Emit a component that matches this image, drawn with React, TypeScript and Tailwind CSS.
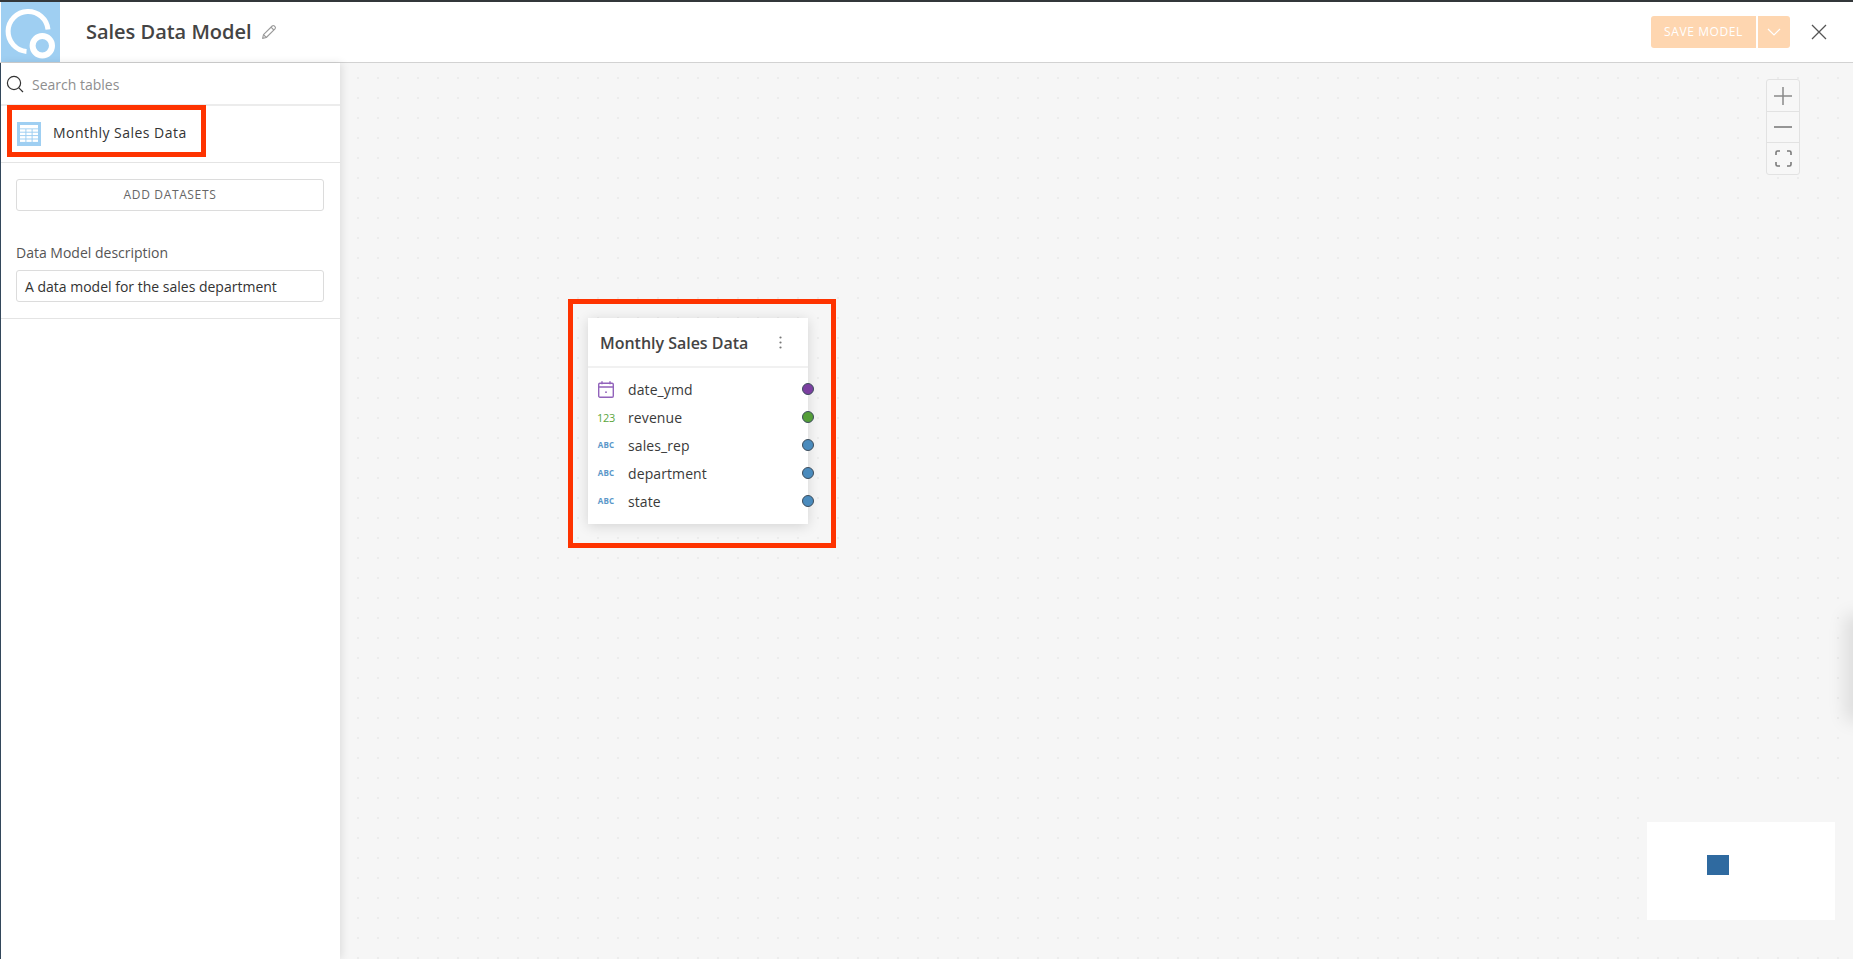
import React from "react";

const FONT = "font-['Open_Sans',sans-serif]";

const fields = [
  { name: "date_ymd", type: "date", dot: "bg-[#7b3fa0]" },
  { name: "revenue", type: "num", dot: "bg-[#549e39]" },
  { name: "sales_rep", type: "abc", dot: "bg-[#4a8bbd]" },
  { name: "department", type: "abc", dot: "bg-[#4a8bbd]" },
  { name: "state", type: "abc", dot: "bg-[#4a8bbd]" },
];

function Logo() {
  return (
    <div className="w-[59px] h-[60px] bg-[#9fcff2] shrink-0">
      <svg width="59" height="60" viewBox="0 0 59 60" fill="none">
        <path d="M47 27.5 A20 20 0 1 0 25.5 49.4" stroke="#fff" strokeWidth="5" />
        <circle cx="41.3" cy="43.7" r="9.7" stroke="#fff" strokeWidth="6" />
      </svg>
    </div>
  );
}

function TableIcon() {
  const rows = [0, 1, 2, 3];
  return (
    <svg width="24" height="24" viewBox="0 0 24 24" className="shrink-0">
      <rect width="24" height="24" fill="#9fcff2" />
      <rect x="3" y="3" width="18" height="3.4" fill="#fff" />
      {rows.map((r) => (
        <g key={r}>
          <rect x="3" y={7.3 + r * 3.4} width="5.4" height="2.4" fill="#fff" />
          <rect x="9.4" y={7.3 + r * 3.4} width="5.2" height="2.4" fill="#fff" />
          <rect x="15.6" y={7.3 + r * 3.4} width="5.4" height="2.4" fill="#fff" />
        </g>
      ))}
    </svg>
  );
}

function FieldIcon({ type }: { type: string }) {
  if (type === "date") {
    return (
      <svg width="16" height="17" viewBox="0 0 16 17" fill="none" stroke="#9263bb" strokeWidth="1.4">
        <rect x="0.7" y="2.2" width="14.6" height="14" rx="1.2" />
        <path d="M0.7 6h14.6M4 0.2v3M12 0.2v3" />
        <rect x="7.2" y="10.4" width="1.6" height="1.6" fill="#9263bb" stroke="none" />
      </svg>
    );
  }
  if (type === "num") {
    return <span className="text-[11px] leading-none text-[#5aa63c] tracking-[-0.3px]">123</span>;
  }
  return <span className="text-[8px] leading-none font-bold text-[#5b97c9] tracking-[0.2px]">ABC</span>;
}

export default function App() {
  return (
    <div className={`${FONT} w-[1853px] h-[959px] flex flex-col overflow-hidden bg-white border-t-2 border-t-[#33373a]`}>
      <header className="h-[61px] shrink-0 flex items-center border-b border-b-[#d2d2d2] bg-white pl-px">
        <Logo />
        <h1 className="ml-[26px] text-[20px] leading-none font-semibold text-[#444] tracking-[-0.02px]">Sales Data Model</h1>
        <svg className="ml-[10px]" width="16" height="16" viewBox="0 0 16 16" fill="none" stroke="#9a9a9a" strokeWidth="1.1" strokeLinejoin="round">
          <path d="M1.6 14.4l.9-3.7L11.2 2a1.5 1.5 0 0 1 2.1 0l.7.7a1.5 1.5 0 0 1 0 2.1L5.3 13.5z" />
          <path d="M10 3.2l2.8 2.8M2.5 10.7l2.8 2.8" />
        </svg>
        <div className="ml-auto flex items-center">
          <button className="w-[105px] h-[32px] rounded-l-[3px] bg-[#fed6b0] text-white text-[12px] font-medium tracking-[0.6px] flex items-center justify-center">SAVE MODEL</button>
          <button className="ml-[2px] w-[32px] h-[32px] rounded-r-[3px] bg-[#fed6b0] flex items-center justify-center">
            <svg width="14" height="8" viewBox="0 0 14 8" fill="none" stroke="#fff" strokeWidth="1.2"><path d="M1 1l6 6 6-6" /></svg>
          </button>
          <svg className="ml-[21px] mr-[26px]" width="16" height="16" viewBox="0 0 16 16" fill="none" stroke="#555" strokeWidth="1.3"><path d="M1 1l14 14M15 1L1 15" /></svg>
        </div>
      </header>

      <div className="flex-1 flex min-h-0 relative">
        <aside className="relative z-10 w-[340px] shrink-0 bg-white border-l border-l-[#33475b] shadow-[2px_0_8px_rgba(0,0,0,0.10)] flex flex-col">
          <div className="h-[43px] shrink-0 flex items-center border-b-2 border-b-[#ececec] pl-[5px]">
            <svg width="18" height="18" viewBox="0 0 18 18" fill="none" stroke="#333" strokeWidth="1.2"><circle cx="8" cy="8" r="6.6" /><path d="M12.8 12.8l4.2 4.2" /></svg>
            <span className="ml-[8px] mt-[2px] text-[14px] text-[#8e8e8e]">Search tables</span>
          </div>
          <div className="h-[57px] shrink-0 flex items-center border-b border-b-[#e4e4e4] pl-[16px] relative">
            <TableIcon />
            <span className="ml-[12px] mb-[4px] text-[14px] text-[#333] tracking-[0.47px]">Monthly Sales Data</span>
            <div className="absolute left-[6px] top-[-1px] w-[199px] h-[52px] border-[5px] border-[#fe3300]" />
          </div>
          <div className="flex flex-col pl-[15px] pr-[16px] pt-[16px] pb-[16px] border-b border-b-[#e4e4e4]">
            <button className="h-[32px] rounded-[3px] border border-[#dcdcdc] text-[12px] font-medium text-[#666] tracking-[0.65px] flex items-center justify-center">ADD DATASETS</button>
            <label className="mt-[32px] text-[14px] leading-[19px] text-[#555]">Data Model description</label>
            <div className="mt-[8px] h-[32px] rounded-[3px] border border-[#dcdcdc] flex items-center pl-[8px] text-[14px] text-[#333]">A data model for the sales department</div>
          </div>
        </aside>

        <main className="relative flex-1 bg-[#f6f6f6] bg-[radial-gradient(circle,#ececec_0.8px,transparent_1.1px)] bg-[size:20px_20px] bg-[position:8px_5px]">
          <div className="absolute right-[-12px] top-[560px] w-[12px] h-[90px] shadow-[0_0_18px_8px_rgba(0,0,0,0.10)]" />

          <div className="absolute right-[53px] top-[16px] w-[34px] rounded-[3px] border border-[#e2e2e2] bg-[#f7f7f7] flex flex-col divide-y divide-[#e2e2e2]">
            <div className="h-[32px] flex items-center justify-center">
              <svg width="18" height="18" viewBox="0 0 18 18" stroke="#8a8a8a" strokeWidth="1.5"><path d="M0 9h18M9 0v18" /></svg>
            </div>
            <div className="h-[31px] flex items-center justify-center">
              <svg width="18" height="2" viewBox="0 0 18 2" stroke="#8a8a8a" strokeWidth="1.8"><path d="M0 1h18" /></svg>
            </div>
            <div className="h-[31px] flex items-center justify-center">
              <svg width="17" height="17" viewBox="0 0 17 17" fill="none" stroke="#7a7a7a" strokeWidth="1.6"><path d="M1 5V2.5A1.5 1.5 0 0 1 2.5 1H5M12 1h2.5A1.5 1.5 0 0 1 16 2.5V5M16 12v2.5a1.5 1.5 0 0 1-1.5 1.5H12M5 16H2.5A1.5 1.5 0 0 1 1 14.5V12" /></svg>
            </div>
          </div>

          {/* table node */}
          <div className="absolute left-[228px] top-[236px] w-[268px] h-[249px] border-[5px] border-[#fe3300]" />
          <div className="absolute left-[248px] top-[255px] w-[220px] h-[206px] bg-white shadow-[0_2px_12px_rgba(0,0,0,0.14)]">
            <div className="h-[50px] flex items-center justify-between border-b-2 border-b-[#f1f1f1] pl-[12px] pr-[26px]">
              <span className="mt-[2px] text-[16px] font-semibold text-[#444] tracking-[-0.02px]">Monthly Sales Data</span>
              <svg width="3" height="13" viewBox="0 0 3 13" fill="#777"><circle cx="1.5" cy="1.5" r="1.1" /><circle cx="1.5" cy="6.5" r="1.1" /><circle cx="1.5" cy="11.5" r="1.1" /></svg>
            </div>
            <div className="pt-[7px] flex flex-col">
              {fields.map((f) => (
                <div key={f.name} className="h-[28px] flex items-center relative">
                  <div className="w-[40px] pr-[4px] flex items-center justify-center shrink-0">
                    <FieldIcon type={f.type} />
                  </div>
                  <span className="text-[14px] text-[#3a3a3a] tracking-[0.1px]">{f.name}</span>
                  <div className={`absolute right-[-6px] top-[8px] w-[12px] h-[12px] rounded-full border border-[#3d4d5c] ${f.dot}`} />
                </div>
              ))}
            </div>
          </div>

          {/* minimap */}
          <div className="absolute right-0 top-[728px] bottom-[14px] w-[208px] bg-[#f6f6f6] pl-[2px]">
            <div className="mt-[31px] w-[188px] h-[98px] bg-white relative">
              <div className="absolute left-[60px] top-[33px] w-[22px] h-[20px] bg-[#2f6aa0]" />
            </div>
          </div>
        </main>
      </div>
    </div>
  );
}
